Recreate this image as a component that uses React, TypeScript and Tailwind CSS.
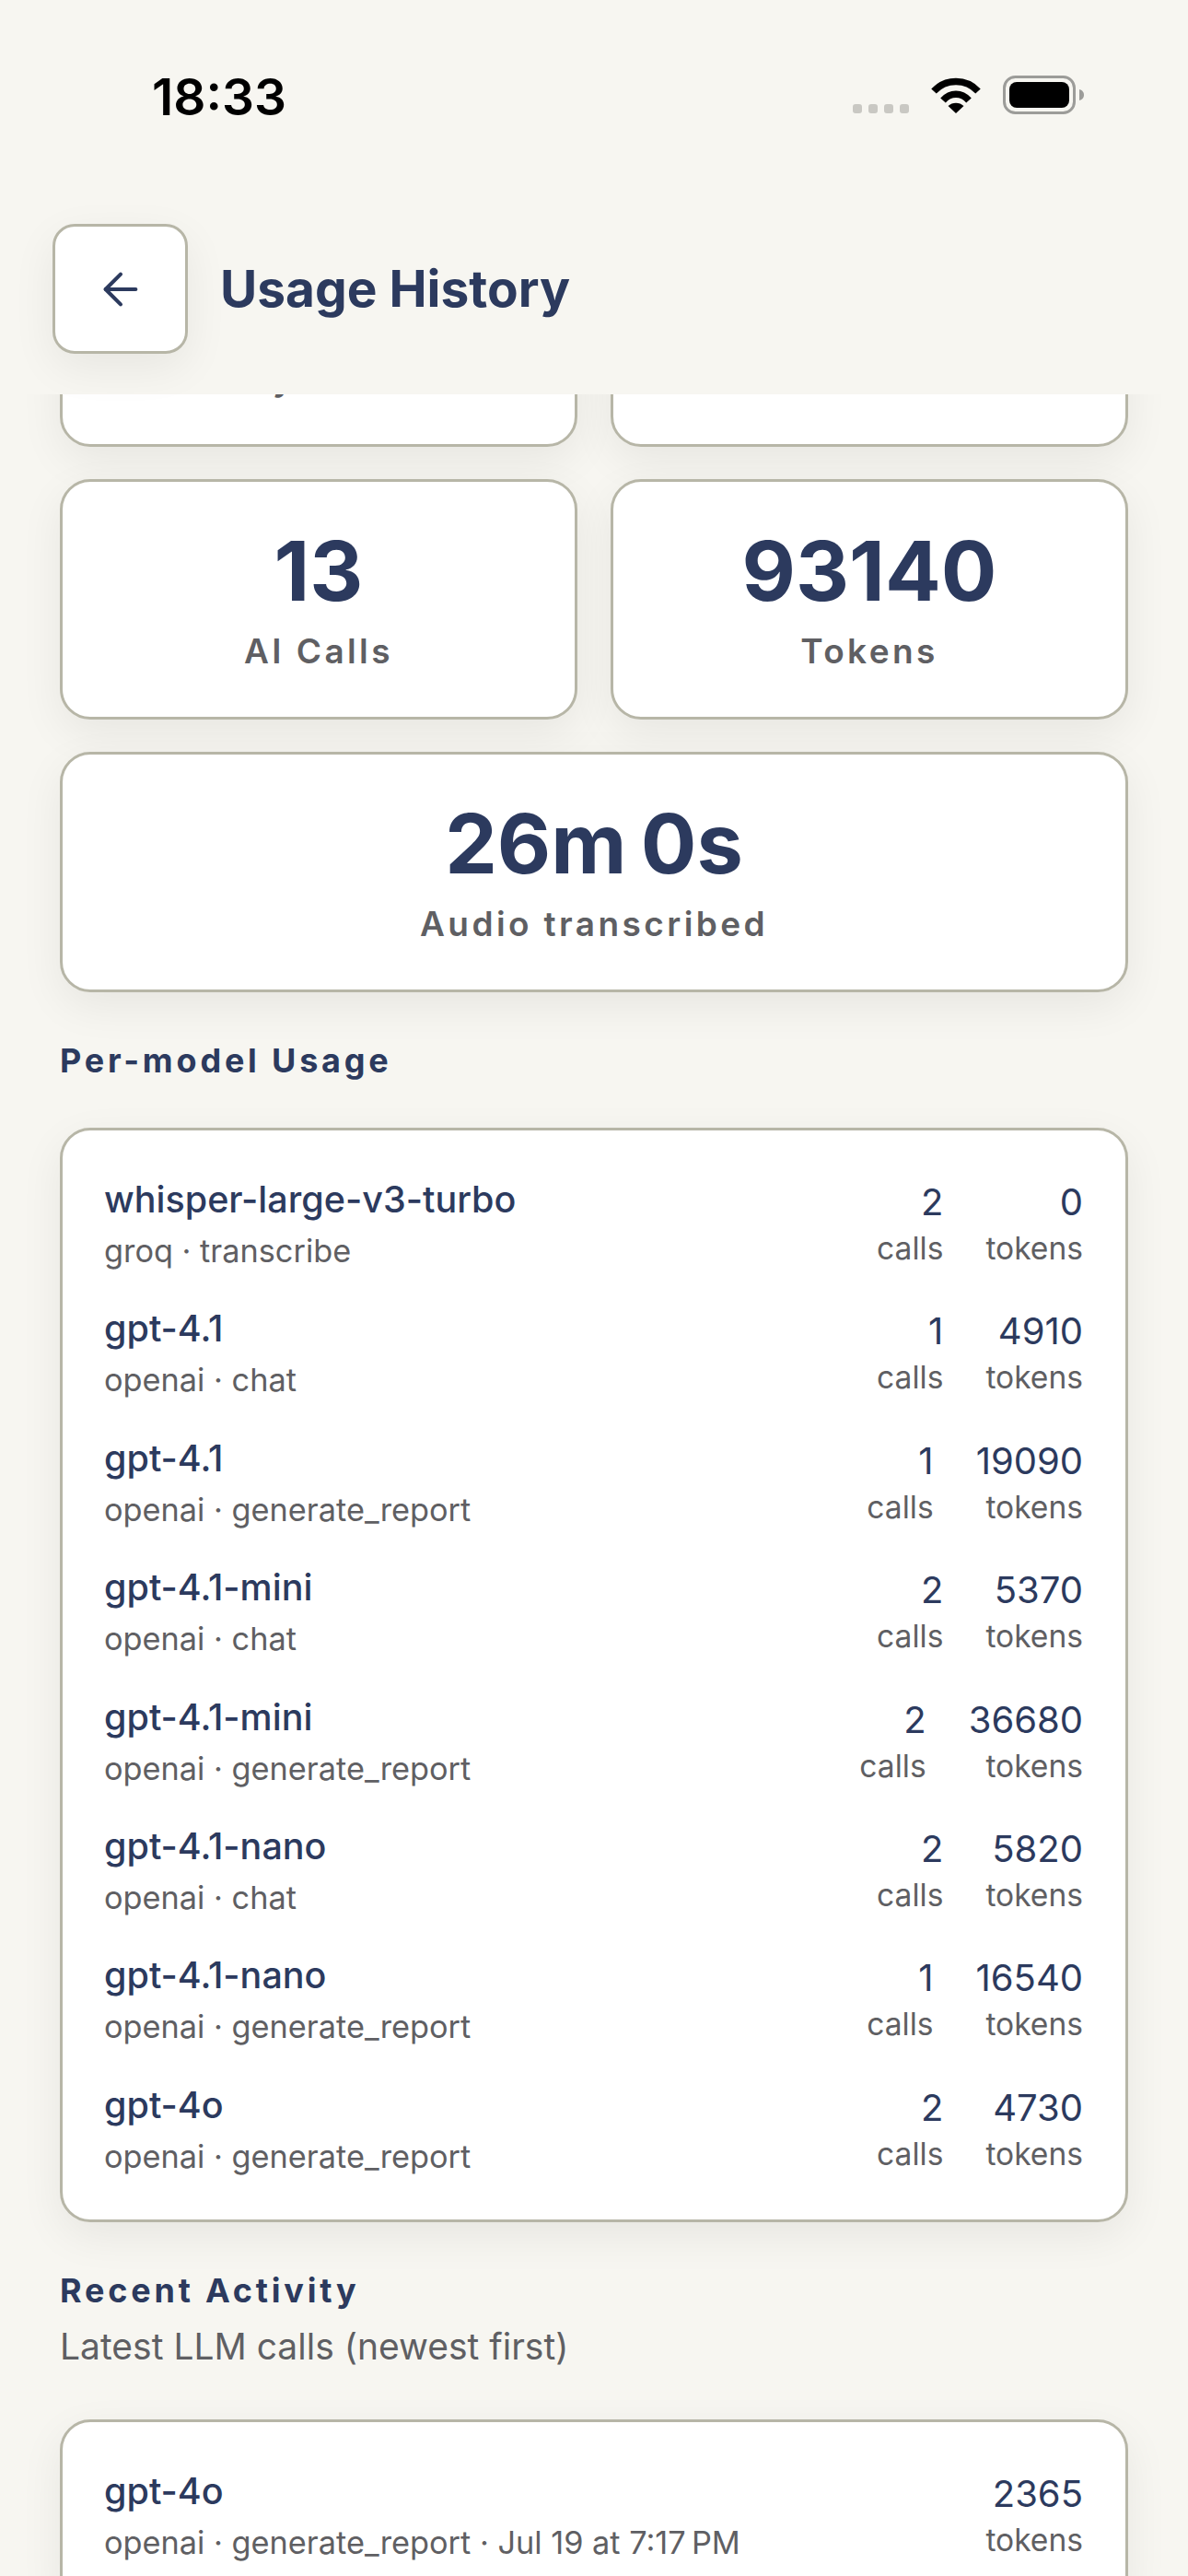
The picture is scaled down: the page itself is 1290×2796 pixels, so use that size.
import React from 'react';
import { ArrowLeft } from 'lucide-react';

const models = [
  { name: 'whisper-large-v3-turbo', sub: 'groq · transcribe', calls: 2, tokens: 0 },
  { name: 'gpt-4.1', sub: 'openai · chat', calls: 1, tokens: 4910 },
  { name: 'gpt-4.1', sub: 'openai · generate_report', calls: 1, tokens: 19090 },
  { name: 'gpt-4.1-mini', sub: 'openai · chat', calls: 2, tokens: 5370 },
  { name: 'gpt-4.1-mini', sub: 'openai · generate_report', calls: 2, tokens: 36680 },
  { name: 'gpt-4.1-nano', sub: 'openai · chat', calls: 2, tokens: 5820 },
  { name: 'gpt-4.1-nano', sub: 'openai · generate_report', calls: 1, tokens: 16540 },
  { name: 'gpt-4o', sub: 'openai · generate_report', calls: 2, tokens: 4730 },
];

const cardClass =
  'bg-white border-[3px] border-[#b7b6a7] rounded-[33px] shadow-[0_15px_48px_rgba(0,0,0,0.065)]';

const StatCard = ({ value, label }: { value: string; label: string }) => (
  <div className={`${cardClass} h-[261px] flex flex-col items-center pt-[43px]`}>
    <div className="text-[90px] leading-[108px] font-bold text-[#2c3a5e] [word-spacing:-6px]">{value}</div>
    <div className="mt-[9px] text-[37px] leading-[48px] font-semibold tracking-[3.4px] text-[#5f5f63]">{label}</div>
  </div>
);

const Metric = ({ value, label }: { value: number; label: string }) => (
  <div className="flex flex-col items-end">
    <div className="text-[40px] leading-[66px] text-[#2c3a5e]">{value}</div>
    <div className="text-[33.6px] leading-[34px] text-[#5f5f63]">{label}</div>
  </div>
);

const SectionTitle = ({ children }: { children: React.ReactNode }) => (
  <h2 className="text-[36px] leading-[48px] font-bold tracking-[3.8px] text-[#2c3a5e]">{children}</h2>
);

export default function App() {
  return (
    <div className="w-[1290px] h-[2796px] overflow-hidden flex flex-col bg-[#f7f6f1] font-[Inter,sans-serif]">
      <div className="relative z-10 h-[428px] shrink-0 bg-[#f7f6f1]">
        {/* status bar */}
        <div className="h-[243px] flex items-start justify-between pl-[165px] pr-[111px]">
          <div className="mt-[72px] text-[55px] leading-[66px] font-semibold text-black">18:33</div>
          <div className="mt-[82px] flex items-end gap-[24px]">
            <div className="flex gap-[7px] mb-[1px]">
              <span className="w-[10px] h-[10px] rounded-[3px] bg-[#c9c8c3]" />
              <span className="w-[10px] h-[10px] rounded-[3px] bg-[#c9c8c3]" />
              <span className="w-[10px] h-[10px] rounded-[3px] bg-[#c9c8c3]" />
              <span className="w-[10px] h-[10px] rounded-[3px] bg-[#c9c8c3]" />
            </div>
            <svg width="54" height="42" viewBox="0 0 54 42" fill="none">
              <path d="M3 17 C16 3 38 3 51 17" stroke="black" strokeWidth="7.5" />
              <path d="M13 27 C21 18 33 18 41 27" stroke="black" strokeWidth="7.5" />
              <path d="M27 41 L18.5 33 C23 28.5 31 28.5 35.5 33 Z" fill="black" />
            </svg>
            <svg width="90" height="42" viewBox="0 0 90 42" fill="none">
              <rect x="1.5" y="1.5" width="76" height="39" rx="12" stroke="#9c9c99" strokeWidth="3" />
              <rect x="7" y="7" width="65" height="28" rx="8" fill="black" />
              <path d="M83 15 C87 16 88 19 88 21 C88 23 87 26 83 27 Z" fill="#9c9c99" />
            </svg>
          </div>
        </div>
        {/* header */}
        <div className="flex items-center gap-[35px] pl-[57px]">
          <button className="w-[147px] h-[141px] flex items-center justify-center bg-white border-[3px] border-[#b7b6a7] rounded-[24px] shadow-[0_15px_48px_rgba(0,0,0,0.065)]">
            <ArrowLeft size={56} color="#2c3a5e" strokeWidth={1.75} />
          </button>
          <h1 className="-mt-[2px] text-[55px] leading-[72px] font-bold text-[#2c3a5e]">Usage History</h1>
        </div>
      </div>

      <div className="flex-1 min-h-0 overflow-hidden">
        <div className="-mt-[204px] px-[65px] flex flex-col">
          <div className="grid grid-cols-2 gap-x-[36px] gap-y-[35px]">
            <StatCard value="3" label="Keywords" />
            <StatCard value="4" label="Notes" />
            <StatCard value="13" label="AI Calls" />
            <StatCard value="93140" label="Tokens" />
            <div className="col-span-2">
              <StatCard value="26m 0s" label="Audio transcribed" />
            </div>
          </div>

          <div className="mt-[50px]">
            <SectionTitle>Per-model Usage</SectionTitle>
          </div>

          <div className={`${cardClass} mt-[49px] pl-[45px] pr-[46px] pt-[45px] pb-[42px] flex flex-col gap-[28.4px]`}>
            {models.map((m, i) => (
              <div key={i} className="flex items-start justify-between">
                <div>
                  <div className="text-[39.5px] leading-[60px] font-medium text-[#2c3a5e]">{m.name}</div>
                  <div className="text-[34.3px] leading-[52px] text-[#5f5f63]">{m.sub}</div>
                </div>
                <div className="flex gap-[46px]">
                  <Metric value={m.calls} label="calls" />
                  <Metric value={m.tokens} label="tokens" />
                </div>
              </div>
            ))}
          </div>

          <div className="mt-[50px]">
            <SectionTitle>Recent Activity</SectionTitle>
          </div>
          <p className="mt-[10px] text-[39px] leading-[54px] text-[#5f5f63]">Latest LLM calls (newest first)</p>

          <div className={`${cardClass} mt-[52px] pl-[45px] pr-[46px] pt-[45px] pb-[40px]`}>
            <div className="flex items-start justify-between">
              <div>
                <div className="text-[39.5px] leading-[60px] font-medium text-[#2c3a5e]">gpt-4o</div>
                <div className="text-[34.3px] leading-[52px] text-[#5f5f63]">openai · generate_report · Jul 19 at 7:17{'\u202f'}PM</div>
              </div>
              <Metric value={2365} label="tokens" />
            </div>
          </div>
        </div>
      </div>
    </div>
  );
}
